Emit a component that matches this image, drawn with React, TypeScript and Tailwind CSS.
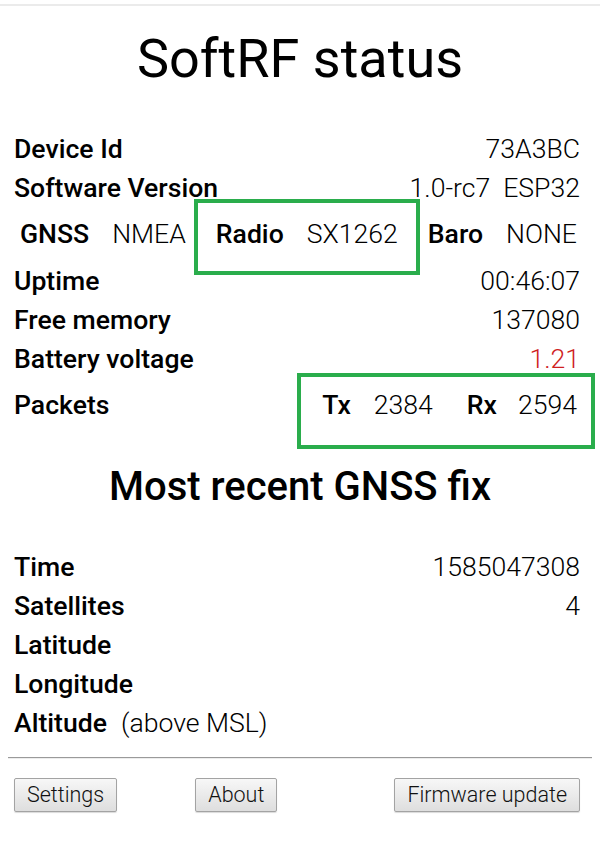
import React from 'react';

const Row = ({ label, value, valueClass = '' }: { label: string; value?: string; valueClass?: string }) => (
  <div className="flex h-[39px] items-center justify-between">
    <span className="font-medium">{label}</span>
    {value && <span className={`font-light ${valueClass}`}>{value}</span>}
  </div>
);

const Pair = ({ label, value }: { label: string; value: string }) => (
  <div className="flex items-center gap-[23px]">
    <span className="font-medium">{label}</span>
    <span className="font-light">{value}</span>
  </div>
);

const Btn = ({ children, className = '' }: { children: React.ReactNode; className?: string }) => (
  <button className={`h-[34px] px-[12px] rounded-[2px] border border-[#a3a3a3] bg-gradient-to-b from-[#f7f7f7] to-[#dedede] text-[21.5px] font-light leading-none text-[#111] shadow-[0_1px_1px_rgba(0,0,0,0.15)] ${className}`}>
    {children}
  </button>
);

export default function App() {
  return (
    <div className="w-[600px] h-[858px] bg-white text-black font-['Roboto',sans-serif] overflow-hidden">
      <div className="h-[4px]" />
      <div className="h-[2px] bg-[#ebebeb]" />

      {/* Title */}
      <h1 className="h-[123px] pt-[26px] text-center text-[54px] leading-[54px] font-normal">SoftRF status</h1>

      <div className="pl-[14px] pr-[20px] text-[26.6px]">
        <Row label="Device Id" value="73A3BC" />
        <Row label="Software Version" value="1.0-rc7  ESP32" valueClass="whitespace-pre" />

        {/* GNSS / Radio / Baro */}
        <div className="flex h-[54px] items-stretch pl-[6px] pr-[3px] justify-between">
          <div className="flex items-center">
            <Pair label="GNSS" value="NMEA" />
          </div>
          <div className="relative flex items-center">
            <Pair label="Radio" value="SX1262" />
            <div className="absolute -left-[22px] -right-[22px] -top-[8px] -bottom-[14px] border-[4px] border-[#2aad4c]" />
          </div>
          <div className="flex items-center">
            <Pair label="Baro" value="NONE" />
          </div>
        </div>

        <Row label="Uptime" value="00:46:07" />
        <Row label="Free memory" value="137080" />
        <Row label="Battery voltage" value="1.21" valueClass="text-[#cf1f1f]" />

        {/* Packets */}
        <div className="flex h-[54px] items-stretch justify-between pr-[3px]">
          <span className="font-medium self-center">Packets</span>
          <div className="relative flex items-center">
            <div className="flex items-center gap-[23px]">
              <span className="font-medium">Tx</span>
              <span className="font-light">2384</span>
            </div>
            <div className="ml-[34px] flex items-center gap-[21px]">
              <span className="font-medium">Rx</span>
              <span className="font-light">2594</span>
            </div>
            <div className="absolute -left-[25px] -right-[18px] -top-[5px] -bottom-[17px] border-[4px] border-[#2aad4c]" />
          </div>
        </div>
      </div>

      {/* GNSS fix */}
      <h2 className="mt-[35px] mb-[40px] text-center text-[40px] leading-[40px] font-medium">Most recent GNSS fix</h2>

      <div className="pl-[14px] pr-[20px] text-[26.6px]">
        <Row label="Time" value="1585047308" />
        <Row label="Satellites" value="4" />
        <Row label="Latitude" />
        <Row label="Longitude" />
        <div className="flex h-[39px] items-center">
          <span className="font-medium">Altitude</span>
          <span className="ml-[14px] font-light">(above MSL)</span>
        </div>
      </div>

      <div className="mx-[8px] mt-[15px] border-t border-b border-t-[#9a9a9a] border-b-[#ededed]" />

      <div className="flex items-center pl-[14px] pr-[20px] mt-[19px]">
        <Btn>Settings</Btn>
        <Btn className="ml-[78px]">About</Btn>
        <Btn className="ml-auto">Firmware update</Btn>
      </div>
    </div>
  );
}
